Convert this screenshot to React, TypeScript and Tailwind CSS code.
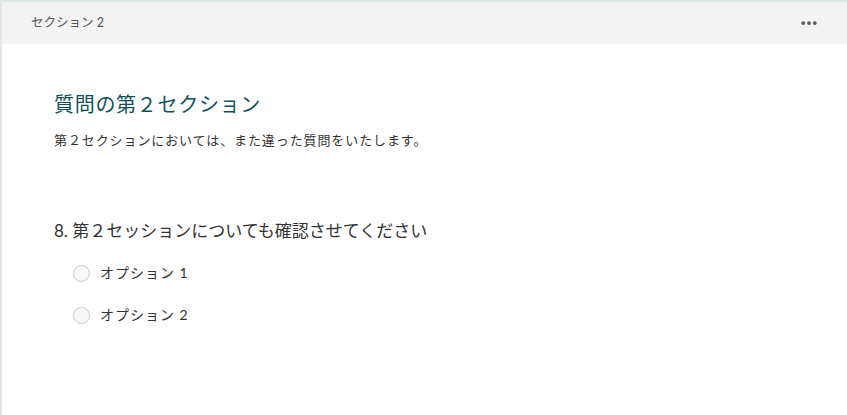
import { MoreHorizontal } from "lucide-react";

const options = ["オプション 1", "オプション 2"];

export default function App() {
  return (
    <div
      className="h-[415px] w-[847px] overflow-hidden border-l-2 border-t-2 border-[#dde8e8] bg-white"
      style={{ fontFamily: '"Lato", "Noto Sans CJK JP", sans-serif' }}
    >
      <div className="flex h-[42px] items-center justify-between bg-[#f3f3f3] pl-[29px] pr-[28px]">
        <span className="text-[12.5px] text-[#555]">セクション 2</span>
        <MoreHorizontal className="h-5 w-5 text-[#555]" strokeWidth={2.5} />
      </div>

      <div className="pl-[52px] pt-[46px]">
        <h1 className="text-[20px] leading-[28px] tracking-[0.7px] text-[#0f5257]">質問の第２セクション</h1>
        <p className="mt-[13px] text-[13px] leading-[18px] tracking-[0.9px] text-[#333]">
          第２セクションにおいては、また違った質問をいたします。
        </p>

        <div className="mt-[70px] text-[17px] leading-[24px] text-[#333]">
          8. 第２セッションについても確認させてください
        </div>

        <div className="mt-[21px] flex flex-col gap-[24px] pl-[19px]">
          {options.map((o) => (
            <label key={o} className="flex items-center gap-[10px]">
              <span className="h-[17px] w-[17px] rounded-full border border-[#c8c8c8] bg-[#f8f8f8]" />
              <span className="text-[14px] leading-[18px] tracking-[1px] text-[#333]">{o}</span>
            </label>
          ))}
        </div>
      </div>
    </div>
  );
}
